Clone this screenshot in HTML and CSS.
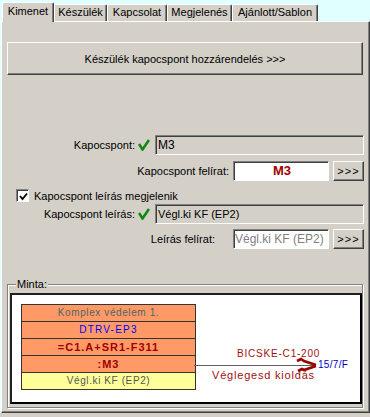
FILE: index.html
```html
<!DOCTYPE html>
<html lang="hu">
<head>
  <meta charset="UTF-8">
  <title>Kimenet</title>
  <link rel="stylesheet" href="styles.css">
</head>
<body>
  <div class="window">
    <div class="tabs">
      <div class="tab active w1">Kimenet</div>
      <div class="tab w2">Készülék</div>
      <div class="tab w3">Kapcsolat</div>
      <div class="tab w4">Megjelenés</div>
      <div class="tab w5">Ajánlott/Sablon</div>
    </div>

    <div class="panel">
      <button class="btn big">Készülék kapocspont hozzárendelés &gt;&gt;&gt;</button>

      <div class="row r1">
        <span class="lbl">Kapocspont:</span>
        <svg class="ok" width="12" height="12" viewBox="0 0 12 12"><path d="M1 5 L4.5 10.5 L11 1" fill="none" stroke="#118811" stroke-width="2.6"/></svg>
        <div class="field gray wide">M3</div>
      </div>

      <div class="row r2">
        <span class="lbl">Kapocspont felírat:</span>
        <div class="field white mid m3">M3</div>
        <button class="btn small">&gt;&gt;&gt;</button>
      </div>

      <div class="row chk">
        <span class="box"><svg width="9" height="9" viewBox="0 0 9 9"><path d="M1 4 L3.5 7 L8 1.5" fill="none" stroke="#000" stroke-width="1.8"/></svg></span>
        <span>Kapocspont leírás megjelenik</span>
      </div>

      <div class="row r4">
        <span class="lbl">Kapocspont leírás:</span>
        <svg class="ok" width="12" height="12" viewBox="0 0 12 12"><path d="M1 5 L4.5 10.5 L11 1" fill="none" stroke="#118811" stroke-width="2.6"/></svg>
        <div class="field gray wide">Végl.ki KF (EP2)</div>
      </div>

      <div class="row r5">
        <span class="lbl lbl2">Leírás felírat:</span>
        <div class="field white mid dim">Végl.ki KF (EP2)</div>
        <button class="btn small">&gt;&gt;&gt;</button>
      </div>

      <div class="group">
        <span class="legend">Minta:</span>
        <div class="canvas">
          <div class="device">
            <div class="cell c-name">Komplex védelem 1.</div>
            <div class="cell c-type">DTRV-EP3</div>
            <div class="cell c-code">=C1.A+SR1-F311</div>
            <div class="cell c-code">:M3</div>
            <div class="cell c-desc">Végl.ki KF (EP2)</div>
          </div>
          <svg class="wire" width="349" height="107" viewBox="0 0 349 107">
            <line x1="182" y1="70.5" x2="302" y2="70.5" stroke="#606060" stroke-width="1"/>
            <path d="M285 66 L289 64 L292 66 L304 70" fill="none" stroke="#990000" stroke-width="2.6"/>
            <path d="M286 76 L290 74 L292 75 L304 71" fill="none" stroke="#990000" stroke-width="2.6"/>
          </svg>
          <span class="t t-top">BICSKE-C1-200</span>
          <span class="t t-ref">15/7/F</span>
          <span class="t t-bot">Véglegesd kioldás</span>
        </div>
      </div>
    </div>
  </div>
</body>
</html>
```

FILE: styles.css
```css
body {
  margin: 0;
  background: #d4d0c8;
  font-family: "Liberation Sans", Arial, sans-serif;
  font-size: 11px;
  color: #000;
}
.window {
  width: 370px;
  height: 413px;
  background: #e0ffff;
}
.tabs {
  display: flex;
  align-items: flex-end;
  height: 21px;
  padding-left: 2px;
}
.tab {
  box-sizing: border-box;
  height: 17px;
  background: #d4d0c8;
  border-top: 1px solid #fff;
  border-left: 1px solid #fff;
  border-right: 1px solid #404040;
  box-shadow: inset -1px 0 #808080;
  border-radius: 2px 2px 0 0;
  text-align: center;
  line-height: 15px;
}
.tab.active {
  height: 20px;
  margin-bottom: -1px;
  position: relative;
  z-index: 1;
  line-height: 16px;
}
.w1 { width: 52px; }
.w2 { width: 53px; }
.w3 { width: 60px; }
.w4 { width: 65px; }
.w5 { width: 86px; }

.panel {
  box-sizing: border-box;
  width: 369px;
  height: 392px;
  margin-left: 1px;
  background: #d4d0c8;
  border-top: 1px solid #fff;
  border-left: 1px solid #fff;
  border-right: 1px solid #404040;
  border-bottom: 1px solid #404040;
  box-shadow: inset -1px -1px #808080;
  padding-top: 20px;
}
.btn {
  box-sizing: border-box;
  display: block;
  background: #d4d0c8;
  border: 1px solid;
  border-color: #fff #404040 #404040 #fff;
  box-shadow: inset -1px -1px #808080;
  font-family: inherit;
  font-size: 11px;
  color: #000;
  padding: 0;
}
.btn.big {
  width: 356px;
  height: 33px;
  margin-left: 5px;
}
.btn.small {
  width: 31px;
  height: 20px;
  margin-left: 4px;
  letter-spacing: 1px;
}
.row {
  display: flex;
  align-items: center;
  justify-content: flex-end;
  height: 20px;
  padding-right: 5px;
}
.r1 { margin-top: 60px; }
.r2 { margin-top: 6px; }
.chk {
  justify-content: flex-start;
  height: 13px;
  margin-top: 8px;
  padding-left: 14px;
}
.r4 { margin-top: 2px; }
.r5 { margin-top: 5px; }
.lbl { margin-right: 3px; }
.r2 .lbl { margin-right: 4px; }
.lbl2 { margin-right: 18px; }
.ok { margin-right: 5px; }
.box {
  box-sizing: border-box;
  width: 13px;
  height: 13px;
  margin-right: 5px;
  background: #fff;
  border: 1px solid;
  border-color: #808080 #fff #fff #808080;
  box-shadow: inset 1px 1px #404040;
  display: flex;
  align-items: center;
  justify-content: center;
  padding: 1px 0 0 1px;
}
.field {
  box-sizing: border-box;
  height: 20px;
  border: 1px solid;
  border-color: #808080 #fff #fff #808080;
  box-shadow: inset 1px 1px #404040;
  padding: 2px 0 0 2px;
  white-space: nowrap;
  overflow: hidden;
}
.field.gray { background: #d4d0c8; font-size: 12px; }
.field.white { background: #fff; }
.wide { width: 209px; }
.mid { width: 96px; }
.m3 {
  text-align: center;
  color: #a00000;
  font-weight: bold;
  font-size: 13px;
  padding-top: 1px;
}
.dim {
  color: #808080;
  font-size: 12px;
  padding-left: 1px;
}
.r4 .field { font-size: 11px; padding-top: 3px; }

.group {
  position: relative;
  box-sizing: border-box;
  width: 356px;
  height: 124px;
  margin: 35px 0 0 5px;
  border: 1px solid #808080;
  box-shadow: inset 1px 1px #fff, 1px 1px #fff;
  padding: 8px 0 0 2px;
}
.legend {
  position: absolute;
  top: -7px;
  left: 8px;
  padding: 0 1px;
  background: #d4d0c8;
}
.canvas {
  position: relative;
  box-sizing: border-box;
  width: 352px;
  height: 111px;
  background: #fff;
  border: 2px solid #000;
  border-color: #202020 #000 #000 #202020;
  padding: 9px 0 0 9px;
}
.device {
  width: 173px;
  border: 1px solid #333;
  border-bottom: 0;
}
.cell {
  box-sizing: border-box;
  height: 17px;
  border-bottom: 1px solid #333;
  background: #ff9a66;
  text-align: center;
  line-height: 16px;
  font-size: 10px;
  letter-spacing: 0.6px;
}
.c-name { color: #4f6468; }
.c-type { color: #0000ff; font-size: 10px; letter-spacing: 1.2px; }
.c-code { color: #a00000; font-weight: bold; font-size: 11px; letter-spacing: 1px; }
.c-desc { background: #ffff99; color: #555; }
.wire {
  position: absolute;
  left: 0;
  top: 0;
}
.t {
  position: absolute;
  white-space: nowrap;
  letter-spacing: 0.8px;
  color: #a01010;
}
.t-top { left: 225px; top: 53px; font-size: 10px; }
.t-ref { left: 306px; top: 64px; font-size: 10px; color: #0000cc; letter-spacing: 0.3px; }
.t-bot { left: 200px; top: 74px; font-size: 11px; }
```
